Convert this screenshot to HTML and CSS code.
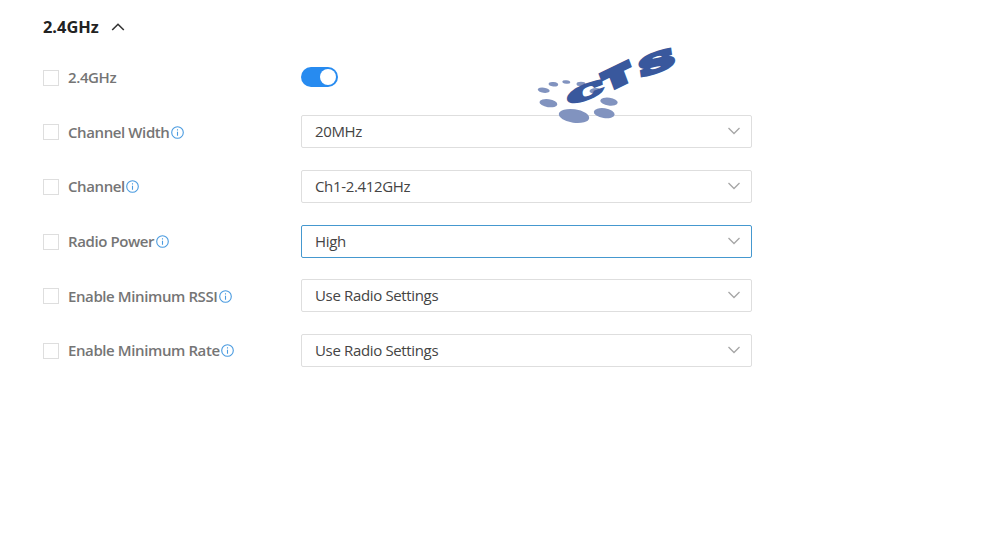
FILE: index.html
```html
<!DOCTYPE html>
<html lang="en">
<head>
<meta charset="utf-8">
<title>2.4GHz</title>
<link rel="stylesheet" href="styles.css">
</head>
<body>
<svg class="defs" width="0" height="0">
  <symbol id="info" viewBox="0 0 13 13"><circle cx="6.5" cy="6.5" r="5.8"/><path d="M6.5 5.7v4M6.5 3.2v1.3"/></symbol>
  <symbol id="down" viewBox="0 0 14 8"><path d="M1.5 1l5.5 5.5L12.5 1"/></symbol>
</svg>
<main class="settings">
  <h2 class="title">2.4GHz<svg class="collapse" viewBox="0 0 14 8"><path d="M1.2 7L7 1.3 12.8 7"/></svg></h2>
  <div class="row">
    <label class="label"><span class="check"></span>2.4GHz</label>
    <span class="toggle"></span>
  </div>
  <div class="row">
    <label class="label"><span class="check"></span><span class="name">Channel Width</span><svg class="info"><use href="#info"/></svg></label>
    <div class="select">20MHz<svg class="down"><use href="#down"/></svg></div>
  </div>
  <div class="row">
    <label class="label"><span class="check"></span><span class="name">Channel</span><svg class="info"><use href="#info"/></svg></label>
    <div class="select">Ch1-2.412GHz<svg class="down"><use href="#down"/></svg></div>
  </div>
  <div class="row">
    <label class="label"><span class="check"></span><span class="name">Radio Power</span><svg class="info"><use href="#info"/></svg></label>
    <div class="select active">High<svg class="down"><use href="#down"/></svg></div>
  </div>
  <div class="row">
    <label class="label"><span class="check"></span><span class="name">Enable Minimum RSSI</span><svg class="info"><use href="#info"/></svg></label>
    <div class="select">Use Radio Settings<svg class="down"><use href="#down"/></svg></div>
  </div>
  <div class="row">
    <label class="label"><span class="check"></span><span class="name">Enable Minimum Rate</span><svg class="info"><use href="#info"/></svg></label>
    <div class="select">Use Radio Settings<svg class="down"><use href="#down"/></svg></div>
  </div>
</main>
<svg class="logo" viewBox="530 40 155 90">
  <g class="dots">
    <ellipse cx="543.7" cy="90.2" rx="6" ry="2.6" transform="rotate(8 543.7 90.2)"/>
    <ellipse cx="553.4" cy="84.2" rx="4.8" ry="2.2" transform="rotate(6 553.4 84.2)"/>
    <ellipse cx="566.3" cy="82" rx="4" ry="1.8" transform="rotate(6 566.3 82)"/>
    <ellipse cx="581" cy="84" rx="4.5" ry="2.2"/>
    <ellipse cx="596" cy="91" rx="6.5" ry="3"/>
    <ellipse cx="548.4" cy="103.2" rx="9" ry="4" transform="rotate(8 548.4 103.2)"/>
    <ellipse cx="609" cy="101.6" rx="8.8" ry="4" transform="rotate(8 609 101.6)"/>
    <ellipse cx="604.2" cy="113.2" rx="10.5" ry="4.9" transform="rotate(8 604.2 113.2)"/>
    <ellipse cx="574" cy="116" rx="15.3" ry="6.8" transform="rotate(8 574 116)"/>
  </g>
  <g class="letters">
    <text y="8" transform="matrix(1.95 -.72 .1 .83 585.5 92.3)">C</text>
    <text class="tee" y="7" transform="matrix(1.75 -.85 .42 1.12 617.5 76.3)">T</text>
    <text y="8" transform="matrix(2.15 -.75 .15 1.08 656.5 62.3)">S</text>
  </g>
</svg>
</body>
</html>
```
FILE: styles.css
```css
* { box-sizing: border-box; }
body {
  position: relative;
  margin: 0;
  background: #fff;
  font: 15px/20px "Open Sans", sans-serif;
  color: #444;
}
.defs { position: absolute; }
.settings { padding: 16px 0 0 43px; width: 752px; }
.title {
  display: flex;
  align-items: center;
  height: 22px;
  margin: 0 0 12px;
  font-size: 16.4px;
  font-weight: 700;
  color: #222;
}
svg { fill: none; }
.collapse { width: 14px; height: 8px; margin-left: 12px; stroke: #333; stroke-width: 1.6; }
.row { display: flex; align-items: center; height: 54.6px; }
.label {
  display: flex;
  align-items: center;
  width: 258px;
  font-weight: 600;
  letter-spacing: -.4px;
  color: #757575;
}
.check { width: 16px; height: 16px; margin: 1px 9px 0 0; border: 1px solid #dedede; }
.info { width: 13px; height: 13px; margin: 1px 0 0 1.5px; stroke: #4a9be0; stroke-width: 1.1; }
.toggle {
  display: flex;
  justify-content: flex-end;
  width: 37px;
  height: 20px;
  padding: 2px;
  border-radius: 10px;
  background: #278bf0;
}
.toggle::after { content: ""; width: 16px; height: 16px; border-radius: 50%; background: #fff; }
.select {
  display: flex;
  align-items: center;
  justify-content: space-between;
  flex: 1;
  height: 33px;
  padding: 0 10px 1px 13px;
  border: 1px solid #dedede;
  border-radius: 2px;
  letter-spacing: -.35px;
}
.select.active { border-color: #4598cf; }
.down { width: 14px; height: 8px; stroke: #a6a6a6; stroke-width: 1.3; }
.logo { position: absolute; left: 530px; top: 40px; width: 155px; height: 90px; }
.dots { fill: #8193bf; }
.letters {
  fill: #39589d;
  stroke: #39589d;
  stroke-width: 3.4;
  font: 700 22px "DejaVu Serif", serif;
  text-anchor: middle;
}
.tee { font-family: "DejaVu Sans", sans-serif; stroke-width: 4.6; font-size: 19px; }
```
